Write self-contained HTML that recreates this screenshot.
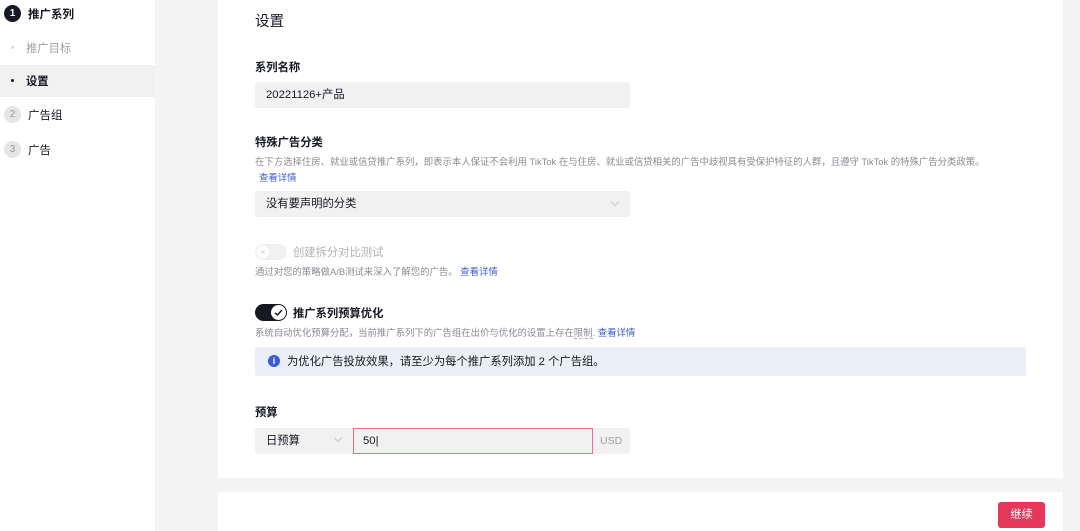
<!DOCTYPE html>
<html><head><meta charset="utf-8"><style>
*{margin:0;padding:0;box-sizing:border-box}
body{width:1080px;height:531px;overflow:hidden;background:#f4f4f4;font-family:"Liberation Sans","Noto Sans CJK SC",sans-serif;color:#161823;position:relative}
.a{position:absolute;white-space:nowrap}
.side{position:absolute;left:0;top:0;width:155px;height:531px;background:#fff}
.card{position:absolute;left:218px;top:0;width:845px;height:478px;background:#fff}
.foot{position:absolute;left:218px;top:492px;width:845px;height:39px;background:#fff}
.b{font-weight:bold;font-size:11.3px}
.d{font-size:9.4px;color:#8a8b91}
.l{color:#3c5bd6}
.inp{position:absolute;background:#f1f1f2;border-radius:3px;font-size:11.3px;line-height:26px;padding-left:11px}
.chev{position:absolute;width:6px;height:6px;border-right:1px solid #c8c8cc;border-bottom:1px solid #c8c8cc;transform:rotate(45deg)}
.num{position:absolute;width:17px;height:17px;border-radius:50%;display:flex;align-items:center;justify-content:center;font-size:10px}
</style></head><body>
<div class="side">
 <div class="num" style="left:4px;top:5px;background:#161823;color:#fff;font-weight:bold">1</div>
 <div class="a b" style="left:28px;top:6px;font-size:11.5px">推广系列</div>
 <div class="a" style="left:11px;top:46px;width:3px;height:3px;border-radius:50%;background:#ddd"></div>
 <div class="a" style="left:26px;top:40px;font-size:11.3px;color:#a0a0a6">推广目标</div>
 <div class="a" style="left:0;top:65px;width:155px;height:32px;background:#f1f1f2"></div>
 <div class="a" style="left:11px;top:79px;width:3px;height:3px;border-radius:50%;background:#161823"></div>
 <div class="a" style="left:26px;top:73px;font-size:11.3px;font-weight:bold">设置</div>
 <div class="num" style="left:4px;top:106px;background:#e6e6e8;color:#999">2</div>
 <div class="a" style="left:28px;top:107px;font-size:11.5px">广告组</div>
 <div class="num" style="left:4px;top:141px;background:#e6e6e8;color:#999">3</div>
 <div class="a" style="left:28px;top:142px;font-size:11.5px">广告</div>
</div>
<div class="card"></div>
<div class="foot"></div>
<div class="a" style="left:255px;top:10px;font-size:14.5px">设置</div>
<div class="a b" style="left:255px;top:59px">系列名称</div>
<div class="inp" style="left:255px;top:82px;width:375px;height:26px">20221126+产品</div>
<div class="a b" style="left:255px;top:134px">特殊广告分类</div>
<div class="a d" style="left:255px;top:154px">在下方选择住房、就业或信贷推广系列，即表示本人保证不会利用 TikTok 在与住房、就业或信贷相关的广告中歧视具有受保护特征的人群，且遵守 TikTok 的特殊广告分类政策。</div>
<div class="a d l" style="left:259px;top:170px">查看详情</div>
<div class="inp" style="left:255px;top:191px;width:375px;height:26px">没有要声明的分类</div>
<div class="chev" style="left:612px;top:199px"></div>
<div class="a" style="left:255px;top:244px;width:32px;height:16px;border-radius:8px;background:#f1f1f2"></div>
<div class="a" style="left:257px;top:246px;width:12px;height:12px;border-radius:50%;background:#fff;color:#ccc;font-size:9px;text-align:center;line-height:12px">×</div>
<div class="a" style="left:293px;top:244px;font-size:11.3px;color:#b0b0b5">创建拆分对比测试</div>
<div class="a d" style="left:255px;top:264px">通过对您的策略做A/B测试来深入了解您的广告。 <span class="l">查看详情</span></div>
<div class="a" style="left:255px;top:304px;width:32px;height:17px;border-radius:9px;background:#161823"></div>
<div class="a" style="left:271px;top:305px;width:15px;height:15px;border-radius:50%;background:#fff"></div>
<svg class="a" style="left:273px;top:307px" width="11" height="11" viewBox="0 0 11 11"><path d="M2 5.8L4.4 8 9 3" fill="none" stroke="#161823" stroke-width="1.5"/></svg>
<div class="a b" style="left:293px;top:305px">推广系列预算优化</div>
<div class="a d" style="left:255px;top:325px">系统自动优化预算分配，当前推广系列下的广告组在出价与优化的设置上存在<span style="border-bottom:1px dashed #aaa">限制</span>. <span class="l">查看详情</span></div>
<div class="a" style="left:255px;top:347px;width:771px;height:29px;background:#e9eef9;border-radius:2px"></div>
<div class="a" style="left:268px;top:355px;width:12px;height:12px;border-radius:50%;background:#3c5bd6;color:#fff;font-size:9px;font-weight:bold;text-align:center;line-height:12px">i</div>
<div class="a" style="left:287px;top:353px;font-size:11.3px">为优化广告投放效果，请至少为每个推广系列添加 2 个广告组。</div>
<div class="a b" style="left:255px;top:404px">预算</div>
<div class="inp" style="left:255px;top:428px;width:375px;height:26px"></div>
<div class="a" style="left:266px;top:428px;font-size:11.3px;line-height:26px">日预算</div>
<div class="chev" style="left:335px;top:435px"></div>
<div class="a" style="left:353px;top:428px;width:240px;height:26px;border:1px solid #e8708a;font-size:11.3px;line-height:24px;padding-left:9px">50<span style="font-weight:normal">|</span></div>
<div class="a" style="left:600px;top:428px;font-size:10.5px;color:#a0a0a6;line-height:26px">USD</div>
<div class="a" style="left:998px;top:502px;width:47px;height:26px;background:#e5375a;border-radius:3px;color:#fff;font-size:11.3px;text-align:center;line-height:26px">继续</div>
</body></html>
